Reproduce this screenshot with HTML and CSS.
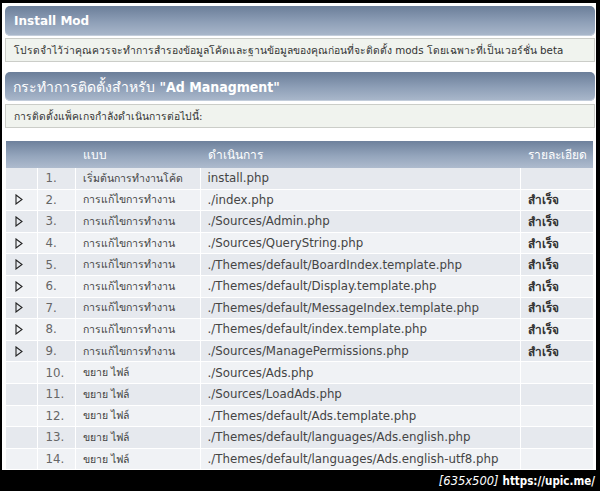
FILE: index.html
```html
<!DOCTYPE html>
<html lang="th">
<head>
<meta charset="utf-8">
<title>Install Mod</title>
<link rel="stylesheet" href="styles.css">
</head>
<body>
<div class="frame">
  <div class="page">
    <div class="catbar"><span class="cat-title">Install Mod</span></div>
    <div class="windowbar">โปรดจำไว้ว่าคุณควรจะทำการสำรองข้อมูลโค้ดและฐานข้อมูลของคุณก่อนที่จะติดตั้ง mods โดยเฉพาะที่เป็นเวอร์ชั่น beta</div>
    <div class="catbar catbar-big"><span class="cat-title-big">กระทำการติดตั้งสำหรับ <b class="mod-name">"Ad Managment"</b></span></div>
    <div class="windowbar windowbar-2">การติดตั้งแพ็คเกจกำลังดำเนินการต่อไปนี้:</div>
    <table class="actions">
      <colgroup>
        <col class="c-arrow"><col class="c-num"><col class="c-type"><col class="c-file"><col class="c-desc">
      </colgroup>
      <thead>
        <tr><th></th><th></th><th>แบบ</th><th>ดำเนินการ</th><th>รายละเอียด</th></tr>
      </thead>
      <tbody>
        <tr class="odd"><td></td><td class="num">1.</td><td>เริ่มต้นการทำงานโค้ด</td><td>install.php</td><td></td></tr>
        <tr class="even"><td class="arrow"><svg width="8" height="11" viewBox="0 0 8 11"><polygon points="1,1 7,5.5 1,10" fill="none" stroke="#222" stroke-width="1.1"/></svg></td><td class="num">2.</td><td>การแก้ไขการทำงาน</td><td>./index.php</td><td class="ok">สำเร็จ</td></tr>
        <tr class="odd"><td class="arrow"><svg width="8" height="11" viewBox="0 0 8 11"><polygon points="1,1 7,5.5 1,10" fill="none" stroke="#222" stroke-width="1.1"/></svg></td><td class="num">3.</td><td>การแก้ไขการทำงาน</td><td>./Sources/Admin.php</td><td class="ok">สำเร็จ</td></tr>
        <tr class="even"><td class="arrow"><svg width="8" height="11" viewBox="0 0 8 11"><polygon points="1,1 7,5.5 1,10" fill="none" stroke="#222" stroke-width="1.1"/></svg></td><td class="num">4.</td><td>การแก้ไขการทำงาน</td><td>./Sources/QueryString.php</td><td class="ok">สำเร็จ</td></tr>
        <tr class="odd"><td class="arrow"><svg width="8" height="11" viewBox="0 0 8 11"><polygon points="1,1 7,5.5 1,10" fill="none" stroke="#222" stroke-width="1.1"/></svg></td><td class="num">5.</td><td>การแก้ไขการทำงาน</td><td>./Themes/default/BoardIndex.template.php</td><td class="ok">สำเร็จ</td></tr>
        <tr class="even"><td class="arrow"><svg width="8" height="11" viewBox="0 0 8 11"><polygon points="1,1 7,5.5 1,10" fill="none" stroke="#222" stroke-width="1.1"/></svg></td><td class="num">6.</td><td>การแก้ไขการทำงาน</td><td>./Themes/default/Display.template.php</td><td class="ok">สำเร็จ</td></tr>
        <tr class="odd"><td class="arrow"><svg width="8" height="11" viewBox="0 0 8 11"><polygon points="1,1 7,5.5 1,10" fill="none" stroke="#222" stroke-width="1.1"/></svg></td><td class="num">7.</td><td>การแก้ไขการทำงาน</td><td>./Themes/default/MessageIndex.template.php</td><td class="ok">สำเร็จ</td></tr>
        <tr class="even"><td class="arrow"><svg width="8" height="11" viewBox="0 0 8 11"><polygon points="1,1 7,5.5 1,10" fill="none" stroke="#222" stroke-width="1.1"/></svg></td><td class="num">8.</td><td>การแก้ไขการทำงาน</td><td>./Themes/default/index.template.php</td><td class="ok">สำเร็จ</td></tr>
        <tr class="odd"><td class="arrow"><svg width="8" height="11" viewBox="0 0 8 11"><polygon points="1,1 7,5.5 1,10" fill="none" stroke="#222" stroke-width="1.1"/></svg></td><td class="num">9.</td><td>การแก้ไขการทำงาน</td><td>./Sources/ManagePermissions.php</td><td class="ok">สำเร็จ</td></tr>
        <tr class="even"><td></td><td class="num">10.</td><td>ขยาย ไฟล์</td><td>./Sources/Ads.php</td><td></td></tr>
        <tr class="odd"><td></td><td class="num">11.</td><td>ขยาย ไฟล์</td><td>./Sources/LoadAds.php</td><td></td></tr>
        <tr class="even"><td></td><td class="num">12.</td><td>ขยาย ไฟล์</td><td>./Themes/default/Ads.template.php</td><td></td></tr>
        <tr class="odd"><td></td><td class="num">13.</td><td>ขยาย ไฟล์</td><td>./Themes/default/languages/Ads.english.php</td><td></td></tr>
        <tr class="even"><td></td><td class="num">14.</td><td>ขยาย ไฟล์</td><td>./Themes/default/languages/Ads.english-utf8.php</td><td></td></tr>
      </tbody>
    </table>
  </div>
  <div class="stamp"><span class="stamp-size">[635x500]</span> <span class="stamp-url">https://upic.me/</span></div>
</div>
</body>
</html>
```

FILE: styles.css
```css
html, body {
  margin: 0;
  padding: 0;
  background: #000;
}

.frame {
  width: 600px;
  height: 491px;
  background: #000;
  display: flex;
  flex-direction: column;
  overflow: hidden;
  font-family: "DejaVu Sans", Tahoma, sans-serif;
}

.page {
  margin: 3px 4px 0 2px;
  height: 467px;
  background: #fff;
  padding: 3px 1px 0 3px;
  box-sizing: border-box;
  display: flex;
  flex-direction: column;
  overflow: hidden;
}

.catbar {
  height: 30px;
  flex: none;
  border-radius: 5px;
  background: linear-gradient(#6b7e99, #8fa0b8 55%, #aab8cb);
  box-shadow: inset 0 -1px 0 #c3cddb;
  display: flex;
  align-items: center;
  padding-left: 9px;
  color: #fff;
}

.cat-title {
  font-size: 12px;
  font-weight: bold;
}

.catbar-big {
  margin-top: 10px;
  height: 29px;
  padding-left: 8px;
}

.cat-title-big {
  font-size: 14px;
  font-weight: normal;
}

.mod-name {
  font-family: "DejaVu Sans Condensed", "DejaVu Sans", sans-serif;
  font-stretch: condensed;
  font-weight: bold;
}

.windowbar {
  margin-top: 2px;
  height: 24px;
  flex: none;
  box-sizing: border-box;
  border: 1px solid #cbcdc8;
  background: #f0f3ee;
  display: flex;
  align-items: center;
  padding-left: 8px;
  font-size: 10.3px;
  color: #333;
  white-space: nowrap;
}

.windowbar-2 {
  margin-top: 3px;
}

.actions {
  margin-top: 13px;
  margin-left: 1px;
  width: 587px;
  border-collapse: collapse;
  table-layout: fixed;
  font-size: 11.8px;
  color: #444;
}

.c-arrow { width: 31px; }
.c-num { width: 38px; }
.c-type { width: 125px; }
.c-file { width: 320px; }
.c-desc { width: 73px; }

.actions thead tr {
  height: 27px;
  background: linear-gradient(#6e819c, #94a5bc 55%, #aebbce);
}

.actions th {
  text-align: left;
  font-weight: normal;
  color: #fff;
  font-size: 12px;
  padding: 0 0 0 8px;
  white-space: nowrap;
  overflow: hidden;
}

.actions td {
  height: 20.6px;
  padding: 0 0 0 7px;
  border: 1px solid #fff;
  white-space: nowrap;
  overflow: hidden;
}

.actions tbody tr:first-child td {
  border-top: 0;
}

.actions td:first-child {
  border-left: 0;
}

.actions tr.odd { background: #e6e9ee; }
.actions tr.even { background: #f0f2f5; }

.actions td.arrow {
  padding-left: 9px;
  line-height: 0;
}

.actions td.num {
  color: #666;
  padding-left: 8px;
}

.actions td.ok {
  font-weight: bold;
  color: #333;
}

.actions td:nth-child(3) {
  font-size: 10.5px;
}

.stamp {
  flex: 1;
  display: flex;
  align-items: center;
  justify-content: flex-end;
  padding-right: 5px;
  color: #fff;
  font-size: 11.5px;
  gap: 4px;
}

.stamp-size {
  font-style: italic;
  font-weight: normal;
}

.stamp-url {
  font-weight: bold;
  font-stretch: condensed;
  font-family: "DejaVu Sans Condensed", "DejaVu Sans", sans-serif;
}
```
